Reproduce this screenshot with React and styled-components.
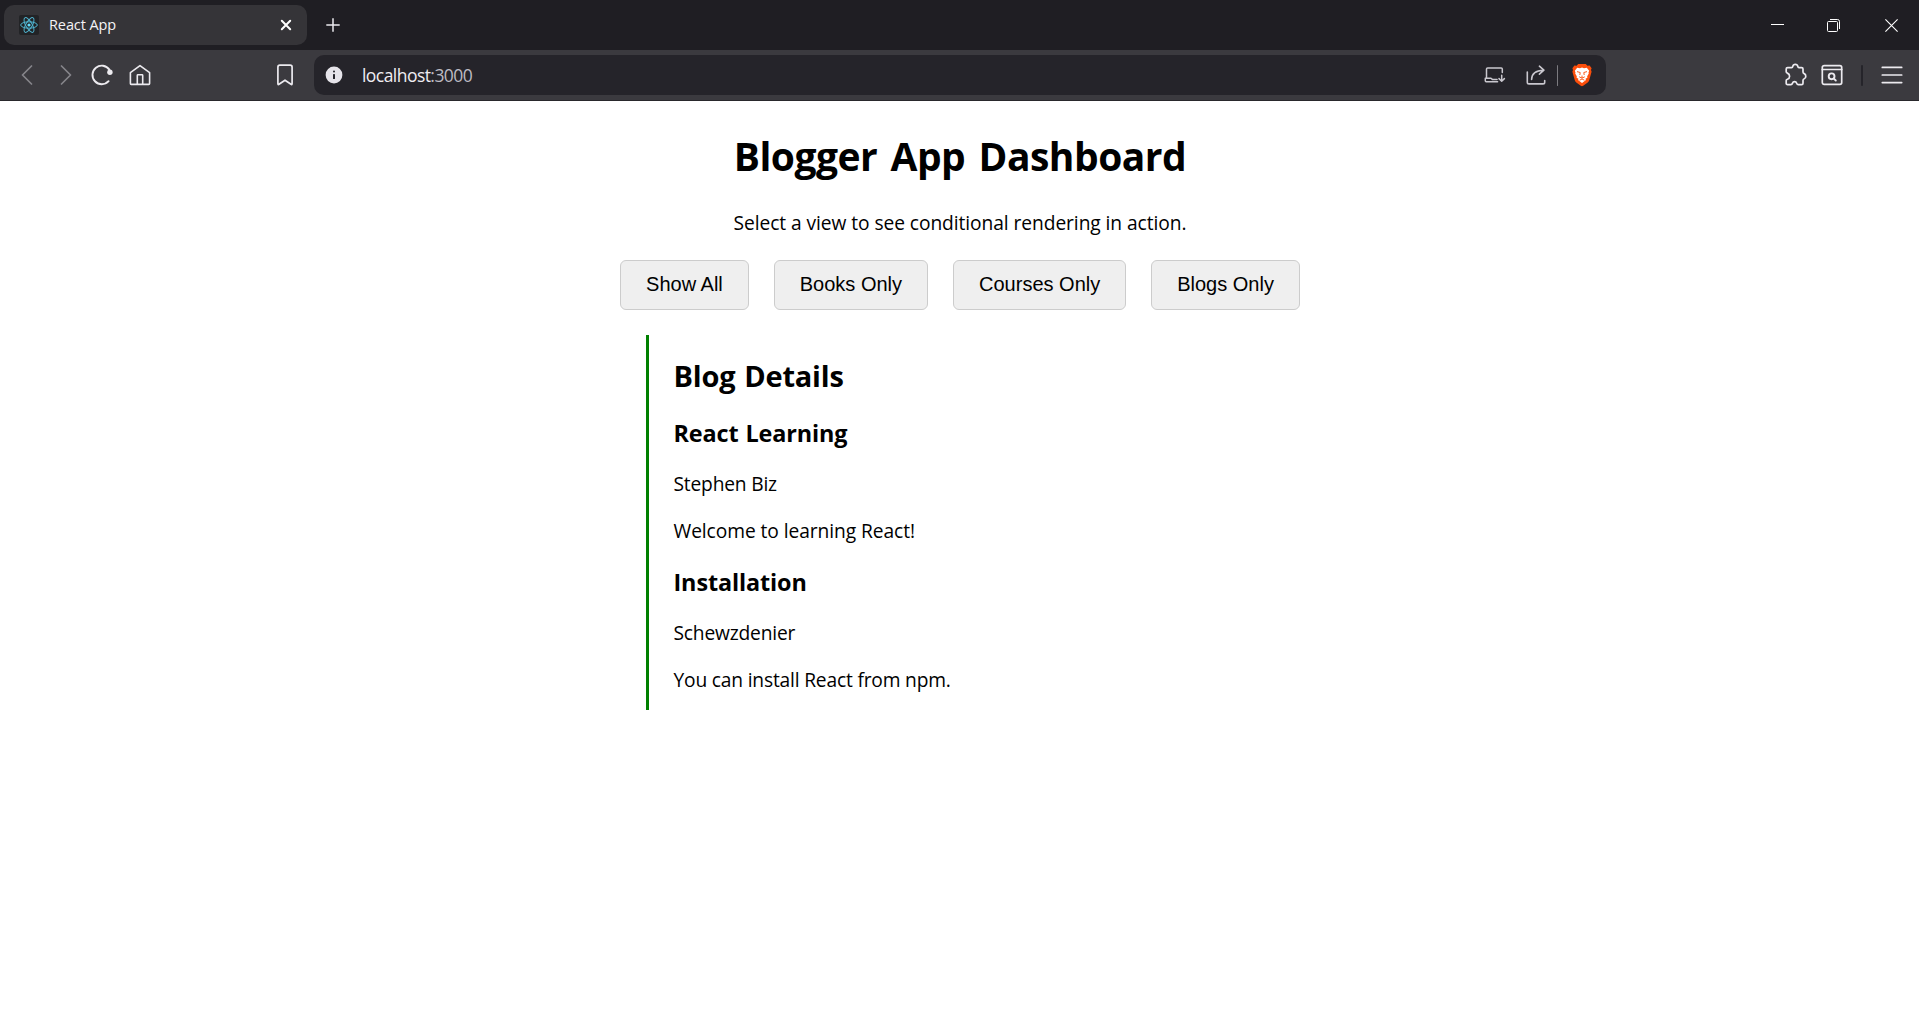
import React, { useState } from "react";
import styled, { createGlobalStyle } from "styled-components";

const GlobalStyle = createGlobalStyle`
  * { box-sizing: border-box; }
  body {
    margin: 0;
    background: #fff;
    color: #000;
    font-family: "Open Sans", "Noto Sans", sans-serif;
    overflow: hidden;
  }
  h1, h2, h3, p { margin: 0; white-space: nowrap; }
  svg { display: block; flex: none; }
`;

const Screen = styled.div`
  display: flex;
  flex-direction: column;
  height: 1013px;
`;

const TabStrip = styled.div`
  display: flex;
  align-items: center;
  height: 50px;
  padding-left: 4px;
  padding-right: 21px;
  background: #1f1e23;
`;

const Tab = styled.div`
  display: flex;
  align-items: center;
  width: 303px;
  height: 40px;
  padding: 0 14px 0 15px;
  border-radius: 10px;
  background: #353438;
`;

const TabTitle = styled.span`
  flex: 1;
  margin-left: 10px;
  color: #f4f3f6;
  font-size: 14.5px;
  line-height: 20px;
  letter-spacing: -0.1px;
`;

const IconButton = styled.button`
  display: flex;
  align-items: center;
  justify-content: center;
  flex: none;
  width: ${(p) => p.$w || 22}px;
  height: ${(p) => p.$h || 24}px;
  margin: 0 0 0 ${(p) => p.$gap || 0}px;
  padding: 0;
  border: 0;
  background: none;
  color: ${(p) => p.$color || "#eceaef"};
`;

const Spacer = styled.div`
  flex: 1;
`;

const Toolbar = styled.div`
  display: flex;
  align-items: center;
  height: 51px;
  padding: 0 16px 0 16px;
  border-bottom: 1px solid #29282c;
  background: #3b3a3f;
`;

const AddressBar = styled.div`
  display: flex;
  align-items: center;
  width: 1292px;
  height: 40px;
  margin-left: 20px;
  padding: 0 14px 0 11px;
  border-radius: 10px;
  background: #25242a;
`;

const Url = styled.span`
  margin-left: 19px;
  color: #efedf2;
  font-size: 17.5px;
  line-height: 24px;
  letter-spacing: -0.55px;
`;

const Port = styled.span`
  color: #bdbbc3;
`;

const Divider = styled.span`
  width: ${(p) => p.$w}px;
  height: 21px;
  margin-left: ${(p) => p.$gap}px;
  border-radius: 1px;
  background: ${(p) => p.$color};
`;

const Page = styled.main`
  display: flex;
  flex: 1;
  flex-direction: column;
  align-items: center;
  padding: 28px 0 0 1px;
`;

const Title = styled.h1`
  font-size: 39px;
  line-height: 53px;
  letter-spacing: -0.5px;
  word-spacing: 3.6px;
`;

const Text = styled.p`
  margin-top: ${(p) => p.$top}px;
  font-size: 19.2px;
  line-height: 27px;
  letter-spacing: ${(p) => p.$tracking || -0.07}px;
`;

const ButtonRow = styled.div`
  display: flex;
  gap: 25px;
  margin-top: 24px;
`;

const ViewButton = styled.button`
  height: 50px;
  padding: 0 25px 2px;
  border: 1px solid #ccc;
  border-radius: 6px;
  background: #efefef;
  color: #000;
  font-family: "Liberation Sans", Arial, sans-serif;
  font-size: 20px;
  white-space: nowrap;
`;

const Details = styled.section`
  width: 628px;
  margin-top: 25px;
  padding: 21px 25px 17px 24.5px;
  border-left: 3px solid green;
`;

const SectionTitle = styled.h2`
  font-size: 29px;
  line-height: 39px;
  letter-spacing: -0.2px;
  word-spacing: 1.5px;
`;

const PostTitle = styled.h3`
  margin-top: 22px;
  font-size: 23.4px;
  line-height: 32px;
  letter-spacing: -0.12px;
  word-spacing: 1px;
`;

const stroke = {
  fill: "none",
  stroke: "currentColor",
  strokeLinecap: "round",
  strokeLinejoin: "round",
};

const ReactLogo = () => (
  <svg width="20" height="20" viewBox="0 0 20 20">
    <rect width="20" height="20" rx="2" fill="#222326" />
    <g fill="none" stroke="#4fb3cf" strokeWidth="1">
      <ellipse cx="10" cy="10" rx="8.3" ry="3.2" />
      <ellipse cx="10" cy="10" rx="8.3" ry="3.2" transform="rotate(60 10 10)" />
      <ellipse cx="10" cy="10" rx="8.3" ry="3.2" transform="rotate(120 10 10)" />
    </g>
    <circle cx="10" cy="10" r="1.6" fill="#61dafb" />
  </svg>
);

const Chevron = ({ right }) => (
  <svg width="12" height="20" viewBox="0 0 12 20" {...stroke} strokeWidth="1.7">
    <path d={right ? "M1.5 1L10.5 10L1.5 19" : "M10.5 1L1.5 10L10.5 19"} />
  </svg>
);

const ReloadIcon = () => (
  <svg width="22" height="22" viewBox="0 0 22 22" {...stroke} strokeWidth="1.9">
    <path d="M17.6 17.2A9.3 9.3 0 1 1 18.4 5.6" />
    <circle cx="18.9" cy="8.2" r="2.7" fill="currentColor" stroke="none" />
  </svg>
);

const HomeIcon = () => (
  <svg width="22" height="22" viewBox="0 0 22 22" {...stroke} strokeWidth="1.6">
    <path d="M1.4 8.6L11 1.6L20.6 8.6V19.6Q20.6 20.4 19.8 20.4H2.2Q1.4 20.4 1.4 19.6Z" />
    <path d="M8.3 20V11.4Q8.3 10.8 8.9 10.8H13.1Q13.7 10.8 13.7 11.4V20" />
  </svg>
);

const BookmarkIcon = () => (
  <svg width="18" height="22" viewBox="0 0 18 22" {...stroke} strokeWidth="1.7">
    <path d="M1.9 3.2Q1.9 1.2 3.9 1.2H14.1Q16.1 1.2 16.1 3.2V19.6Q16.1 21 15 20.3L9 16.2L3 20.3Q1.9 21 1.9 19.6Z" />
  </svg>
);

const InfoIcon = () => (
  <svg width="18" height="18" viewBox="0 0 18 18">
    <circle cx="9" cy="9" r="8.4" fill="#e6e4ea" />
    <rect x="8" y="4.6" width="2" height="2" rx="1" fill="#25242a" />
    <rect x="8" y="7.9" width="2" height="5.2" rx="0.6" fill="#25242a" />
  </svg>
);

const InstallIcon = () => (
  <svg width="22" height="18" viewBox="0 0 22 18" {...stroke} strokeWidth="1.5">
    <path d="M18.3 6.4V3Q18.3 1.9 17.2 1.9H3.6Q2.5 1.9 2.5 3V12.3" />
    <path d="M13.6 15.7H2.2Q1.3 15.7 1.3 14.8V12.3H7L8.3 13.4H13" />
    <path d="M17.7 9.2V15M15 12.6L17.7 15.2L20.4 12.6" />
  </svg>
);

const ShareIcon = () => (
  <svg width="20" height="20" viewBox="0 0 20 20" {...stroke} strokeWidth="1.6">
    <path d="M1.3 7V17.2Q1.3 18.9 3 18.9H17Q18.7 18.9 18.7 17.2V15.6" />
    <path d="M5.6 14.4Q5.8 5.6 17.6 5.2M13.4 1.2L17.9 5.2L13.4 9.2" />
  </svg>
);

const BraveIcon = () => (
  <svg width="20" height="24" viewBox="0 0 20 24">
    <path
      fill="#fb4e0b"
      d="M6.2 1H13.8L15.4 2.7L17.6 2.5L19.6 5.2L19 7L19.6 8.8L17.2 17.3Q16.8 18.6 15.7 19.4L11.2 22.8Q10 23.7 8.8 22.8L4.3 19.4Q3.2 18.6 2.8 17.3L.4 8.8L1 7L.4 5.2L2.4 2.5L4.6 2.7Z"
    />
    <path
      fill="#fff"
      d="M5.2 4.7L8 5.2L10 4.6L12 5.2L14.8 4.7L17.2 7.8L16.5 9.5L16.8 10.6L15.2 13.2L15.4 14.8L13.5 15.7L14 17L10 20L6 17L6.5 15.7L4.6 14.8L4.8 13.2L3.2 10.6L3.5 9.5L2.8 7.8Z"
    />
    <path
      fill="none"
      stroke="#fb4e0b"
      strokeWidth="0.9"
      d="M5 8.6L8.2 9.5L7.8 12M15 8.6L11.8 9.5L12.2 12M7.2 13.8L10 15.2L12.8 13.8M10 12.6V15M7.6 17.2L10 16L12.4 17.2"
    />
  </svg>
);

const PuzzleIcon = () => (
  <svg width="22" height="24" viewBox="0 0 22 24" {...stroke} strokeWidth="1.7">
    <path d="M2.6 4.6H6.6Q7.6 4.6 7.8 3.4Q8.2 1.4 10.3 1.4Q12.4 1.4 12.8 3.4Q13 4.6 14 4.6H16.6Q18 4.6 18 6V9Q18 10.2 19.2 10.6Q20.8 11.2 20.8 13.2Q20.8 15.2 19.2 15.8Q18 16.2 18 17.4V20.2Q18 21.6 16.6 21.6H13.2Q12.2 21.6 11.8 20.4Q11.2 18.7 9.6 18.7Q8 18.7 7.4 20.4Q7 21.6 6 21.6H2.6Q1.2 21.6 1.2 20.2V17.6Q1.2 16.7 2.4 16.3Q4.6 15.4 4.6 13.2Q4.6 11 2.4 10.1Q1.2 9.7 1.2 8.8V6Q1.2 4.6 2.6 4.6Z" />
  </svg>
);

const TabSearchIcon = () => (
  <svg width="22" height="22" viewBox="0 0 22 22" {...stroke} strokeWidth="1.7">
    <rect x="1.3" y="1.6" width="19.4" height="18.8" rx="1.8" />
    <path d="M1.3 5.5H20.7" />
    <circle cx="10.6" cy="12.3" r="2.9" strokeWidth="1.9" />
    <path d="M12.9 14.6L14.8 16.5" strokeWidth="1.9" />
  </svg>
);

const MenuIcon = () => (
  <svg width="22" height="20" viewBox="0 0 22 20" {...stroke} strokeWidth="1.7">
    <path d="M1.3 2.4H20.7M1.3 10H20.7M1.3 17.6H20.7" />
  </svg>
);

const CloseTabIcon = () => (
  <svg width="12" height="12" viewBox="0 0 12 12" {...stroke} strokeWidth="2">
    <path d="M1.8 1.8L10.2 10.2M10.2 1.8L1.8 10.2" />
  </svg>
);

const PlusIcon = () => (
  <svg width="14" height="14" viewBox="0 0 14 14" {...stroke} strokeLinecap="butt" strokeWidth="1.5">
    <path d="M7 .3V13.7M.3 7H13.7" />
  </svg>
);

const MinimizeIcon = () => (
  <svg width="13" height="13" viewBox="0 0 13 13">
    <rect y="5" width="13" height="1" fill="currentColor" />
  </svg>
);

const RestoreIcon = () => (
  <svg width="13" height="13" viewBox="0 0 13 13" fill="none" stroke="currentColor">
    <rect x=".5" y="2.5" width="10" height="10" rx="1" />
    <path d="M3 .5H10.5Q12.5 .5 12.5 2.5V10" />
  </svg>
);

const CloseIcon = () => (
  <svg width="13" height="13" viewBox="0 0 13 13" stroke="currentColor" strokeWidth="1.1">
    <path d="M.4 .4L12.6 12.6M12.6 .4L.4 12.6" />
  </svg>
);

const views = ["Show All", "Books Only", "Courses Only", "Blogs Only"];

const posts = [
  { title: "React Learning", author: "Stephen Biz", body: "Welcome to learning React!" },
  { title: "Installation", author: "Schewzdenier", body: "You can install React from npm.", tracking: -0.18 },
];

export default function App() {
  const [, setView] = useState("Blogs Only");
  return (
    <Screen>
      <GlobalStyle />
      <TabStrip>
        <Tab>
          <ReactLogo />
          <TabTitle>React App</TabTitle>
          <IconButton $w={14} $color="#fff"><CloseTabIcon /></IconButton>
        </Tab>
        <IconButton $w={14} $gap={19}><PlusIcon /></IconButton>
        <Spacer />
        <IconButton $w={13} $color="#fff"><MinimizeIcon /></IconButton>
        <IconButton $w={13} $gap={43} $color="#fff"><RestoreIcon /></IconButton>
        <IconButton $w={13} $gap={45} $color="#fff"><CloseIcon /></IconButton>
      </TabStrip>
      <Toolbar>
        <IconButton $color="#85848a"><Chevron /></IconButton>
        <IconButton $gap={17} $color="#85848a"><Chevron right /></IconButton>
        <IconButton $gap={14}><ReloadIcon /></IconButton>
        <IconButton $gap={16}><HomeIcon /></IconButton>
        <IconButton $w={18} $gap={125}><BookmarkIcon /></IconButton>
        <AddressBar>
          <InfoIcon />
          <Url>localhost<Port>:3000</Port></Url>
          <Spacer />
          <IconButton $color="#c9c7ce"><InstallIcon /></IconButton>
          <IconButton $w={20} $gap={20} $color="#c9c7ce"><ShareIcon /></IconButton>
          <Divider $w={1} $gap={11} $color="#7c7b80" />
          <IconButton $w={20} $gap={14}><BraveIcon /></IconButton>
        </AddressBar>
        <Spacer />
        <IconButton><PuzzleIcon /></IconButton>
        <IconButton $gap={14}><TabSearchIcon /></IconButton>
        <Divider $w={2} $gap={18} $color="#25242a" />
        <IconButton $gap={18}><MenuIcon /></IconButton>
      </Toolbar>
      <Page>
        <Title>Blogger App Dashboard</Title>
        <Text $top={27}>Select a view to see conditional rendering in action.</Text>
        <ButtonRow>
          {views.map((v) => (
            <ViewButton key={v} onClick={() => setView(v)}>{v}</ViewButton>
          ))}
        </ButtonRow>
        <Details>
          <SectionTitle>Blog Details</SectionTitle>
          {posts.map((p) => (
            <React.Fragment key={p.title}>
              <PostTitle>{p.title}</PostTitle>
              <Text $top={21} $tracking={-0.18}>{p.author}</Text>
              <Text $top={20} $tracking={p.tracking}>{p.body}</Text>
            </React.Fragment>
          ))}
        </Details>
      </Page>
    </Screen>
  );
}
